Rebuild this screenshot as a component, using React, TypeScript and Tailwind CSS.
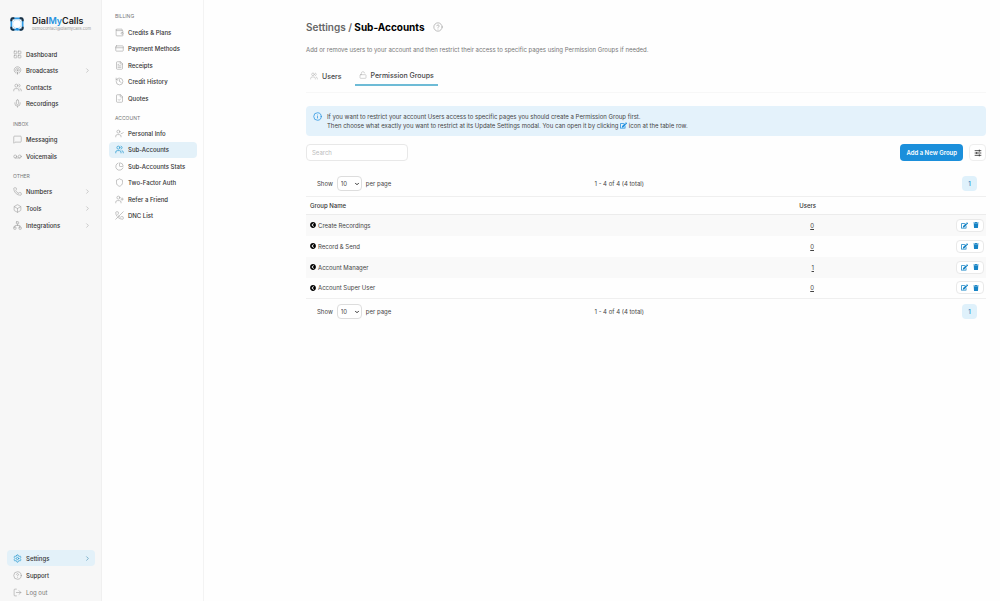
import type { ReactNode } from 'react';
import {
  Box,
  ChartPie,
  ChevronDown,
  ChevronRight,
  CircleHelp,
  CreditCard,
  FileCheck,
  FileText,
  History,
  Info,
  LayoutGrid,
  LockOpen,
  LogOut,
  MessageSquare,
  Mic,
  Network,
  Phone,
  PhoneOff,
  Podcast,
  Settings,
  Shield,
  UserCheck,
  UserPlus,
  Users,
  Voicemail,
  Wallet,
  type LucideIcon,
} from 'lucide-react';
import { FaEdit, FaTrash, FaChevronCircleLeft } from 'react-icons/fa';
import clsx from 'clsx';

type NavItem = {
  label: string;
  icon: LucideIcon;
  arrow?: boolean;
  active?: boolean;
  muted?: boolean;
};

const mainNav: NavItem[] = [
  { label: 'Dashboard', icon: LayoutGrid },
  { label: 'Broadcasts', icon: Podcast, arrow: true },
  { label: 'Contacts', icon: Users },
  { label: 'Recordings', icon: Mic },
];

const inboxNav: NavItem[] = [
  { label: 'Messaging', icon: MessageSquare },
  { label: 'Voicemails', icon: Voicemail },
];

const otherNav: NavItem[] = [
  { label: 'Numbers', icon: Phone, arrow: true },
  { label: 'Tools', icon: Box, arrow: true },
  { label: 'Integrations', icon: Network, arrow: true },
];

const bottomNav: NavItem[] = [
  { label: 'Settings', icon: Settings, arrow: true, active: true },
  { label: 'Support', icon: CircleHelp },
  { label: 'Log out', icon: LogOut, muted: true },
];

const billingNav: NavItem[] = [
  { label: 'Credits & Plans', icon: Wallet },
  { label: 'Payment Methods', icon: CreditCard },
  { label: 'Receipts', icon: FileText },
  { label: 'Credit History', icon: History },
  { label: 'Quotes', icon: FileCheck },
];

const accountNav: NavItem[] = [
  { label: 'Personal Info', icon: UserCheck },
  { label: 'Sub-Accounts', icon: Users, active: true },
  { label: 'Sub-Accounts Stats', icon: ChartPie },
  { label: 'Two-Factor Auth', icon: Shield },
  { label: 'Refer a Friend', icon: UserPlus },
  { label: 'DNC List', icon: PhoneOff },
];

const groups = [
  { name: 'Create Recordings', users: 0 },
  { name: 'Record & Send', users: 0 },
  { name: 'Account Manager', users: 1 },
  { name: 'Account Super User', users: 0 },
];

function Logo() {
  return (
    <svg viewBox="0 0 42 42" className="size-[14px] shrink-0" fill="none" aria-hidden="true">
      <rect x="4" y="4" width="34" height="34" rx="5" fill="#fff" stroke="#2f9be6" strokeWidth="5" />
      <path
        d="M4 13V8a4 4 0 0 1 4-4h5M29 4h5a4 4 0 0 1 4 4v5M38 29v5a4 4 0 0 1-4 4h-5M13 38H8a4 4 0 0 1-4-4v-5"
        stroke="#1c2f40"
        strokeWidth="6"
      />
      <circle cx="21" cy="21" r="13" fill="#fff" stroke="#a9d6f5" strokeWidth="2" />
      <path d="M17 33l5 8 4-8z" fill="#1f8fe0" />
    </svg>
  );
}

function NavList({ items, className }: { items: NavItem[]; className: string }) {
  return (
    <ul className={clsx('flex flex-col justify-between', className)}>
      {items.map(({ label, icon: Icon, arrow, active, muted }) => (
        <li key={label}>
          <a
            href="#"
            className={clsx(
              'flex h-4 items-center gap-1 rounded-sm pr-1 pl-1.5',
              active && 'bg-[#e3f1f9]',
              muted ? 'font-normal text-[#777]' : 'font-medium text-[#333]'
            )}
          >
            <Icon
              size={9}
              strokeWidth={active ? 2 : 1.5}
              className={clsx('shrink-0', active ? 'text-[#2b9bd0]' : 'text-[#999]')}
            />
            <span className="flex-1">{label}</span>
            {arrow && (
              <ChevronRight size={7} className={active ? 'text-[#3a86ad]' : 'text-[#aaa]'} />
            )}
          </a>
        </li>
      ))}
    </ul>
  );
}

function NavHeading({ children }: { children: ReactNode }) {
  return <h2 className="px-1.5 text-[5px] leading-[8px] text-[#777]">{children}</h2>;
}

function Sidebar() {
  return (
    <aside className="flex w-[102px] shrink-0 flex-col border-r border-[#f0f0f0] bg-[#f7f7f7] pr-1.5 pb-px pl-[7px]">
      <div className="flex items-center gap-2 pt-4 pl-[3px]">
        <Logo />
        <div className="min-w-0">
          <div className="text-[9px] leading-[10px] font-semibold text-[#222]">
            Dial<span className="text-[#2492e0]">My</span>Calls
          </div>
          <div className="text-[4px] leading-[6px] text-[#999]">democontact@dialmycalls.com</div>
        </div>
      </div>
      <nav className="mt-3.5 flex flex-1 flex-col">
        <NavList items={mainNav} className="min-h-[66px]" />
        <div className="mt-2 mb-[3px]">
          <NavHeading>INBOX</NavHeading>
        </div>
        <NavList items={inboxNav} className="min-h-[33px]" />
        <div className="mt-2 mb-[3px]">
          <NavHeading>OTHER</NavHeading>
        </div>
        <NavList items={otherNav} className="min-h-[50px]" />
        <div className="mt-auto">
          <NavList items={bottomNav} className="min-h-[50px]" />
        </div>
      </nav>
    </aside>
  );
}

function SubNav() {
  return (
    <nav className="w-[102px] shrink-0 border-r border-[#f3f3f3] bg-[#fefefe] pt-3 pr-1.5 pl-[7px]">
      <div className="mb-1">
        <NavHeading>BILLING</NavHeading>
      </div>
      <NavList items={billingNav} className="min-h-[82px]" />
      <div className="mt-2 mb-[3px]">
        <NavHeading>ACCOUNT</NavHeading>
      </div>
      <NavList items={accountNav} className="min-h-[99px]" />
    </nav>
  );
}

function Pager({ id }: { id: string }) {
  return (
    <div className="grid grid-cols-[5fr_auto_6fr] items-center pr-[9px] pl-[11px] text-[#444]">
      <div className="flex items-center gap-1">
        <label htmlFor={id}>Show</label>
        <div className="relative">
          <select
            id={id}
            className="h-[15px] w-[25px] appearance-none rounded-sm border border-[#ddd] bg-white pl-[3px]"
          >
            <option>10</option>
            <option>25</option>
            <option>50</option>
          </select>
          <ChevronDown
            size={6}
            strokeWidth={4}
            className="pointer-events-none absolute top-[5px] right-[2px] text-[#333]"
          />
        </div>
        <span>per page</span>
      </div>
      <span>1 - 4 of 4 (4 total)</span>
      <button className="size-[15px] justify-self-end rounded-sm bg-[#dff1fb] font-medium text-[#1c86c2]">
        1
      </button>
    </div>
  );
}

function GroupsTable() {
  return (
    <table className="my-[5px] w-full table-fixed border-y border-[#efefef] text-[#444]">
      <thead>
        <tr className="h-[18px] border-b border-[#ececec] text-[#333]">
          <th className="w-[60%] pl-1 text-left font-medium">Group Name</th>
          <th className="w-[15%] text-right font-medium">Users</th>
          <th className="w-1/4" aria-label="Actions" />
        </tr>
      </thead>
      <tbody>
        {groups.map((group) => (
          <tr key={group.name} className="h-[21px] odd:bg-[#f9f9f9]">
            <td className="pl-1">
              <div className="flex items-center gap-[2px]">
                <FaChevronCircleLeft size={6} className="text-black" />
                {group.name}
              </div>
            </td>
            <td className="pr-[2px] text-right">
              <a href="#" className="underline">
                {group.users}
              </a>
            </td>
            <td>
              <div className="mr-[2px] ml-auto flex h-[13px] w-[28px] items-center justify-center gap-[5px] rounded-sm border border-[#e9e9e9] bg-white text-[#1583c5]">
                <button aria-label={`Edit ${group.name}`}>
                  <FaEdit size={7} />
                </button>
                <button aria-label={`Delete ${group.name}`}>
                  <FaTrash size={6} />
                </button>
              </div>
            </td>
          </tr>
        ))}
      </tbody>
    </table>
  );
}

export default function App() {
  return (
    <div className="flex min-h-screen bg-[#fefefe] font-['Inter','Liberation_Sans',sans-serif] text-[6px] leading-[9px]">
      <Sidebar />
      <SubNav />
      <main className="min-w-0 flex-1 pt-5 pr-3.5 pl-[102px]">
        <div className="flex items-center gap-2">
          <h1 className="text-[10px] leading-[14px] font-bold text-black">
            <span className="font-semibold text-[#666]">Settings /</span> Sub-Accounts
          </h1>
          <CircleHelp size={10} strokeWidth={1.5} className="text-[#999]" />
        </div>
        <p className="mt-[11px] text-[#777]">
          Add or remove users to your account and then restrict their access to specific pages using
          Permission Groups if needed.
        </p>

        <div className="mt-3 flex border-b border-[#f7f7f7] pb-1.5 text-[7px]">
          <button className="flex h-5 items-center gap-1 pr-[13px] pl-1 font-medium text-[#444]">
            <Users size={8} strokeWidth={1.5} className="text-[#aaa]" />
            Users
          </button>
          <button className="flex h-5 items-center gap-1 border-b-2 border-[#6dbbd6] px-1 font-medium text-[#444]">
            <LockOpen size={8} strokeWidth={1.5} className="text-[#aaa]" />
            Permission Groups
          </button>
        </div>

        <div className="mt-[13px] flex gap-[5px] rounded-sm bg-[#e4f2fb] px-[7px] py-1.5 text-[#444]">
          <Info size={9} className="shrink-0 text-[#2492e0]" />
          <p>
            If you want to restrict your account Users access to specific pages you should create a
            Permission Group first.
            <br />
            Then choose what exactly you want to restrict at its Update Settings modal. You can open
            it by clicking <FaEdit size={7} className="inline align-text-top text-[#1f8fe0]" /> icon
            at the table row.
          </p>
        </div>

        <div className="mt-2 flex items-center">
          <input
            type="search"
            aria-label="Search"
            placeholder="Search"
            className="h-[17px] w-[102px] rounded-sm border border-[#e8e8e8] bg-white px-[5px] placeholder:text-[#bbb]"
          />
          <button className="ml-auto h-[17px] rounded-sm bg-[#1b8fdb] px-1.5 font-semibold text-white">
            Add a New Group
          </button>
          <button
            aria-label="Columns"
            className="ml-1.5 flex size-[17px] items-center justify-center rounded-sm border border-[#eee] bg-white"
          >
            <svg viewBox="0 0 24 24" className="size-2" fill="none" stroke="#333" strokeWidth="2.5">
              <path d="M2 5h20M2 12h20M2 19h20M16 2v6M8 9v6M16 16v6" />
            </svg>
          </button>
        </div>

        <div className="mt-[15px]">
          <Pager id="per-page-top" />
          <GroupsTable />
          <Pager id="per-page-bottom" />
        </div>
      </main>
    </div>
  );
}
